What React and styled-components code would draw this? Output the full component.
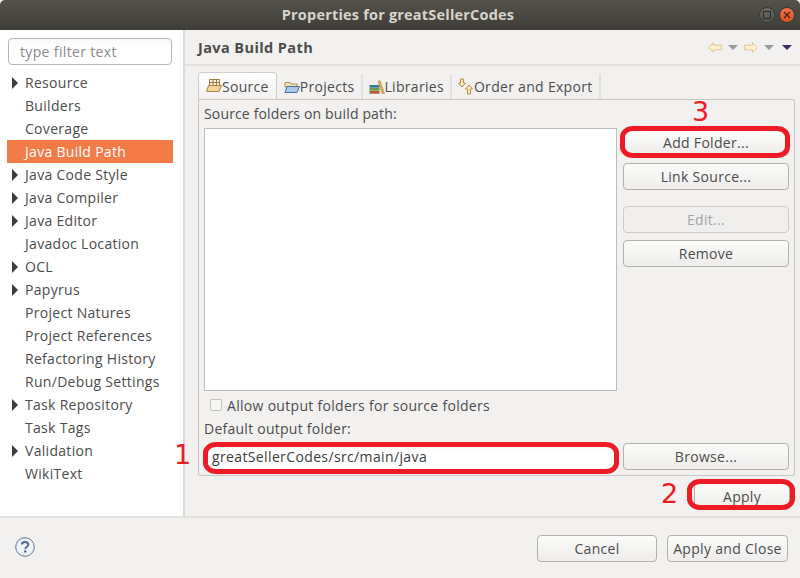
import styled, { createGlobalStyle } from "styled-components";

const GlobalStyle = createGlobalStyle`
  html, body { margin: 0; padding: 0; background: #f2f1f0; }
  body { font-family: "Open Sans", "Noto Sans", sans-serif; font-size: 14px; color: #4c4c4c; letter-spacing: 0.3px; }
  * { box-sizing: border-box; }
`;

const Window = styled.div`
  width: 800px;
  height: 578px;
  display: flex;
  flex-direction: column;
  overflow: hidden;
  background: #f2f1f0;
`;

const TitleBar = styled.div`
  height: 30px;
  flex: none;
  position: relative;
  display: flex;
  align-items: center;
  justify-content: center;
  padding-bottom: 1px;
  background: linear-gradient(#55524b, #3e3d38);
  border-radius: 5px 5px 0 0;
`;

const TitleText = styled.div`
  font-weight: 700;
  font-size: 14.5px;
  color: #d8d4ca;
  margin-left: -4px;
  letter-spacing: 0.2px;
`;

const WindowButtons = styled.div`
  position: absolute;
  right: 5px;
  top: 7px;
  display: flex;
  gap: 4px;
`;

const WindowButton = styled.div`
  width: 16px;
  height: 16px;
  border-radius: 50%;
  display: flex;
  align-items: center;
  justify-content: center;
  background: ${({ $close }) => ($close ? "linear-gradient(#f0744a, #d9501f)" : "linear-gradient(#6e6c66, #555450)")};
  border: 1px solid #3a3935;
`;

const Body = styled.div`
  flex: 1;
  display: flex;
  min-height: 0;
`;

const Sidebar = styled.div`
  width: 185px;
  flex: none;
  background: #fff;
  border-right: 2px solid #dcdad7;
  padding: 8px 0 0 7px;
`;

const FilterInput = styled.div`
  width: 164px;
  height: 27px;
  margin-left: 1px;
  border: 1px solid #b8b6b2;
  border-radius: 4px;
  padding: 0 11px;
  line-height: 25px;
  color: #8a8a8a;
  background: linear-gradient(#f8f8f7, #fff 30%);
  letter-spacing: 0.35px;
`;

const Tree = styled.div`
  margin-top: 6px;
  width: 166px;
`;

const TreeRow = styled.div`
  height: 23px;
  display: flex;
  align-items: center;
  padding-left: 5px;
  gap: 7px;
  white-space: nowrap;
  background: ${({ $selected }) => ($selected ? "#f47b47" : "transparent")};
  color: ${({ $selected }) => ($selected ? "#fff" : "#4c4c4c")};
`;

const Arrow = styled.span`
  width: 6px;
  height: 12px;
  flex: none;
  ${({ $show }) =>
    $show
      ? "border-left: 6px solid #3c3c3c; border-top: 6px solid transparent; border-bottom: 6px solid transparent;"
      : ""}
`;

const Main = styled.div`
  flex: 1;
  min-width: 0;
  display: flex;
  flex-direction: column;
`;

const Header = styled.div`
  height: 36px;
  flex: none;
  display: flex;
  align-items: center;
  justify-content: space-between;
  padding: 1px 8px 0 13px;
  border-bottom: 2px solid #e3e1de;
`;

const HeaderTitle = styled.div`
  font-weight: 700;
  font-size: 14.5px;
  color: #4c4c4c;
  letter-spacing: 0.4px;
`;

const NavIcons = styled.div`
  display: flex;
  align-items: center;
  gap: 6px;
`;

const Drop = styled.span`
  width: 0;
  height: 0;
  margin-left: ${({ $dark }) => ($dark ? "2px" : "0")};
  border-left: 5px solid transparent;
  border-right: 5px solid transparent;
  border-top: 5px solid ${({ $dark }) => ($dark ? "#3f2a63" : "#9a9a9a")};
`;

const TabArea = styled.div`
  flex: 1;
  padding: 6px 5px 0 13px;
  display: flex;
  flex-direction: column;
`;

const TabBar = styled.div`
  display: flex;
  height: 27px;
  flex: none;
  align-items: flex-end;
`;

const Tab = styled.div`
  height: 25px;
  padding: 0 6px;
  display: flex;
  align-items: center;
  white-space: nowrap;
  border-right: 2px solid #e3e1de;
`;

const ActiveTab = styled(Tab)`
  height: 27px;
  padding: 0 7px;
  margin-right: 1px;
  border: 1px solid #cfcdc9;
  border-bottom: 0;
  border-radius: 4px 4px 0 0;
  background: linear-gradient(#fff, #f2f1f0);
`;

const Panel = styled.div`
  height: 377px;
  flex: none;
  border: 1px solid #c9c7c3;
  border-radius: 0 2px 2px 2px;
  padding: 5px 5px 0 5px;
  display: flex;
  flex-direction: column;
`;

const Label = styled.div`
  height: 23px;
  line-height: 17px;
  white-space: nowrap;
  letter-spacing: 0.15px;
`;

const SourceRow = styled.div`
  display: flex;
  gap: 6px;
  height: 263px;
  flex: none;
`;

const SourceList = styled.div`
  width: 413px;
  flex: none;
  background: #fff;
  border: 1px solid #bfbdb9;
`;

const ButtonColumn = styled.div`
  width: 166px;
  padding-top: 1px;
  display: flex;
  flex-direction: column;
`;

const Button = styled.div`
  width: ${({ $width }) => $width || "100%"};
  height: 27px;
  flex: none;
  margin-top: ${({ $top }) => $top || 0}px;
  display: flex;
  align-items: center;
  justify-content: center;
  white-space: nowrap;
  border: 1px solid ${({ disabled }) => (disabled ? "#cfcdca" : "#b3b1ad")};
  border-radius: 4px;
  color: ${({ disabled }) => (disabled ? "#a5a5a5" : "#4c4c4c")};
  background: ${({ disabled }) => (disabled ? "#f0efee" : "linear-gradient(#fbfbfa, #eeedeb)")};
`;

const CheckRow = styled.div`
  display: flex;
  align-items: center;
  gap: 5px;
  height: 22px;
  margin-top: 3px;
  padding-left: 6px;
`;

const Checkbox = styled.span`
  width: 12px;
  height: 12px;
  flex: none;
  border: 1px solid #c4c2be;
  border-radius: 2px;
  background: #f6f6f5;
`;

const OutputLabel = styled(Label)`
  height: 16px;
  margin-top: 4px;
  margin-bottom: 7px;
  letter-spacing: 0.25px;
`;

const OutputRow = styled.div`
  display: flex;
  gap: 6px;
  height: 27px;
  flex: none;
`;

const OutputInput = styled.div`
  width: 413px;
  height: 100%;
  padding: 0 8px;
  line-height: 27px;
  white-space: nowrap;
  color: #3c3c3c;
  background: linear-gradient(#f4f4f3, #fff 35%);
  letter-spacing: 0.37px;
`;

const ApplyRow = styled.div`
  display: flex;
  justify-content: flex-end;
  padding: 7px 5px 0 0;
`;

const Annotated = styled.div`
  position: relative;
  flex: none;
  width: ${({ $width }) => $width || "100%"};
`;

const Ring = styled.span`
  position: absolute;
  inset: ${({ $inset }) => $inset};
  border: 5px solid #ed1c24;
  border-radius: 13px / 11px;
  pointer-events: none;
`;

const Mark = styled.span`
  position: absolute;
  left: ${({ $left }) => $left}px;
  top: ${({ $top }) => $top}px;
  color: #ed1c24;
  font-family: "DejaVu Sans", sans-serif;
  font-size: 27px;
  line-height: 30px;
  letter-spacing: 0;
`;

const Footer = styled.div`
  height: 62px;
  flex: none;
  border-top: 2px solid #e3e1de;
  display: flex;
  align-items: center;
  padding: 0 12px 0 15px;
`;

const HelpBox = styled.div`
  display: flex;
  margin-top: -3px;
`;

const FooterButtons = styled.div`
  margin-left: auto;
  display: flex;
  gap: 10px;
`;

const NavArrow = ({ flip }) => (
  <svg width="14" height="11" viewBox="0 0 14 11" style={flip ? { transform: "scaleX(-1)" } : undefined}>
    <path d="M.7 5.500 5.500.6v2.600h7.800v4.600H5.500v2.600z" fill="#fdf1d2" stroke="#e3c58d" strokeWidth="1" />
  </svg>
);

const SourceIcon = () => (
  <svg width="16" height="16" viewBox="0 0 16 16">
    <path d="M3.500 1.500h10v6h-10z" fill="#fbf3df" stroke="#9c7a45" />
    <path d="M7 1.500v6M10.500 1.500v6M3.500 4.500h10" stroke="#9c7a45" fill="none" />
    <path d="M.5 13.500 2.500 7.500h13l-2.500 6z" fill="#f3d59b" stroke="#a9803f" />
  </svg>
);

const ProjectsIcon = () => (
  <svg width="16" height="16" viewBox="0 0 16 16">
    <path d="M1 3.500h5l1 1.500h6v3H1z" fill="#f3e2b3" stroke="#a98f55" />
    <path d="M1 13.500 3 7.500h12.500l-2.500 6z" fill="#a9c8ea" stroke="#4a6f9e" />
  </svg>
);

const LibrariesIcon = () => (
  <svg width="16" height="16" viewBox="0 0 16 16">
    <rect x="0.500" y="6" width="10" height="2.700" fill="#2f7f8f" />
    <rect x="0.500" y="9" width="10" height="2.700" fill="#6a9a45" />
    <rect x="0.500" y="12" width="10" height="2.700" fill="#b5553a" />
    <path d="M9 2.500 11 1.500 15.500 14.500h-2.500z" fill="#e2a94a" stroke="#b5803a" strokeWidth="0.500" />
  </svg>
);

const OrderIcon = () => (
  <svg width="16" height="17" viewBox="0 0 16 17">
    <path d="M2.500 1h3v4h2L4 9 .5 5h2z" fill="#fbeab8" stroke="#b09048" />
    <path d="M11 7l3.500 4h-2v5h-3v-5h-2z" fill="#fbeab8" stroke="#b09048" />
  </svg>
);

const HelpIcon = () => (
  <svg width="20" height="20" viewBox="0 0 20 20">
    <circle cx="10" cy="10" r="9.300" fill="#f1f2f5" stroke="#5d7497" />
    <path d="M6.800 7.500C7 5.500 8.500 5 10 5c2 0 3.300 1 3.300 2.600 0 2.200-3 2.200-3 4.400" fill="none" stroke="#4b6690" strokeWidth="1.900" />
    <circle cx="10.200" cy="14.500" r="1.200" fill="#4b6690" />
  </svg>
);

const treeItems = [
  ["Resource", true],
  ["Builders"],
  ["Coverage"],
  ["Java Build Path", false, true],
  ["Java Code Style", true],
  ["Java Compiler", true],
  ["Java Editor", true],
  ["Javadoc Location"],
  ["OCL", true],
  ["Papyrus", true],
  ["Project Natures"],
  ["Project References"],
  ["Refactoring History"],
  ["Run/Debug Settings"],
  ["Task Repository", true],
  ["Task Tags"],
  ["Validation", true],
  ["WikiText"],
];

const App = () => {
  return (
    <Window>
      <GlobalStyle />
      <TitleBar>
        <TitleText>Properties for greatSellerCodes</TitleText>
        <WindowButtons>
          <WindowButton>
            <svg width="10" height="10" viewBox="0 0 10 10">
              <rect x="1.500" y="1.500" width="7" height="7" fill="none" stroke="#2f2e2b" strokeWidth="1.200" />
            </svg>
          </WindowButton>
          <WindowButton $close>
            <svg width="8" height="8" viewBox="0 0 8 8">
              <path d="M1 1l6 6M7 1 1 7" stroke="#4a2010" strokeWidth="1.200" />
            </svg>
          </WindowButton>
        </WindowButtons>
      </TitleBar>
      <Body>
        <Sidebar>
          <FilterInput>type filter text</FilterInput>
          <Tree>
            {treeItems.map(([name, expandable, selected]) => (
              <TreeRow key={name} $selected={selected}>
                <Arrow $show={expandable} />
                {name}
              </TreeRow>
            ))}
          </Tree>
        </Sidebar>
        <Main>
          <Header>
            <HeaderTitle>Java Build Path</HeaderTitle>
            <NavIcons>
              <NavArrow />
              <Drop />
              <NavArrow flip />
              <Drop />
              <Drop $dark />
            </NavIcons>
          </Header>
          <TabArea>
            <TabBar>
              <ActiveTab>
                <SourceIcon />
                Source
              </ActiveTab>
              <Tab>
                <ProjectsIcon />
                Projects
              </Tab>
              <Tab>
                <LibrariesIcon />
                Libraries
              </Tab>
              <Tab>
                <OrderIcon />
                Order and Export
              </Tab>
            </TabBar>
            <Panel>
              <Label>Source folders on build path:</Label>
              <SourceRow>
                <SourceList />
                <ButtonColumn>
                  <Annotated>
                    <Mark $left={69} $top={-32}>3</Mark>
                    <Button>Add Folder...</Button>
                    <Ring $inset="-3px -1px -2px -3px" />
                  </Annotated>
                  <Button $top={7}>Link Source...</Button>
                  <Button $top={16} disabled>Edit...</Button>
                  <Button $top={7}>Remove</Button>
                </ButtonColumn>
              </SourceRow>
              <CheckRow>
                <Checkbox />
                Allow output folders for source folders
              </CheckRow>
              <OutputLabel>Default output folder:</OutputLabel>
              <OutputRow>
                <Annotated $width="413px">
                  <Mark $left={-30} $top={-3}>1</Mark>
                  <OutputInput>greatSellerCodes/src/main/java</OutputInput>
                  <Ring $inset="-1px -2px -4px -1px" />
                </Annotated>
                <Button $width="166px">Browse...</Button>
              </OutputRow>
            </Panel>
            <ApplyRow>
              <Annotated $width="96px">
                <Mark $left={-33} $top={-4}>2</Mark>
                <Button>Apply</Button>
                <Ring $inset="-4px -5px 0 -7px" />
              </Annotated>
            </ApplyRow>
          </TabArea>
        </Main>
      </Body>
      <Footer>
        <HelpBox>
          <HelpIcon />
        </HelpBox>
        <FooterButtons>
          <Button $width="120px">Cancel</Button>
          <Button $width="121px">Apply and Close</Button>
        </FooterButtons>
      </Footer>
    </Window>
  );
};

export default App;
